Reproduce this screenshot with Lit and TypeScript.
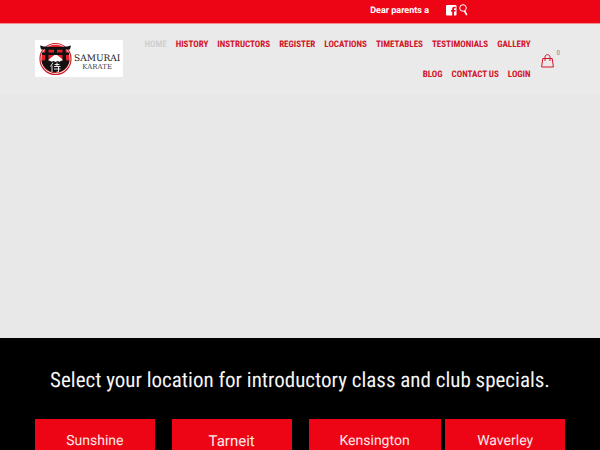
import { LitElement, html, css, svg } from "lit";
import { customElement, property } from "lit/decorators.js";
import { classMap } from "lit/directives/class-map.js";

@customElement("samurai-logo")
class SamuraiLogo extends LitElement {
  static styles = css`
    :host { display: block; }
    .logo {
      display: flex; align-items: center; gap: 2px;
      width: 88px; height: 37px; box-sizing: border-box; padding-left: 4px;
      background: #fff; color: #222; text-decoration: none;
    }
    .mark { flex: none; display: block; }
    .name {
      display: flex; flex-direction: column; align-items: center; padding-top: 8px;
      font-family: "DejaVu Serif", serif;
    }
    .first { font-size: 9px; line-height: 9px; }
    .second { font-size: 7px; line-height: 7px; color: #444; }
  `;
  render() {
    return html`<a class="logo" href="#" aria-label="Samurai Karate">
      <svg class="mark" width="33" height="35" viewBox="0 0 33 35" aria-hidden="true">
        <circle cx="16.5" cy="18" r="15.5" fill="#fff" stroke="#c9202b" stroke-width="1.2" />
        <circle cx="16.5" cy="18" r="14.2" fill="#e5222b" />
        <path d="M2.500 19.500h28a14.200 14.200 0 0 1-28 0z" fill="#111" />
        <path d="M8 20l5.500-4.500 2-1.500h2.500l2 1.500 5.500 4.500-3-.5-2 1.200-2-.8-2 1.200-2-1.200-2 .8-2-1.200z" fill="#fff" />
        <path d="M1 4.500c5 2 26 2 31 0l-1 3.700c-3 .8-26 .8-29 0z" fill="#111" />
        <path d="M3 11.500h27v2.500H3zM6.500 8h3v13.500l-.5 3H5.500zM23.500 8h3l1 16.500H24l-.5-3zM15 8h3v4h-3z" fill="#111" />
        <path d="M14 21.500l-2.500 4M13 24.500v6.500M15.500 23.500h5M18 21.500v4M15 25.500h6.500M15 28h6.500M19.500 25.500v5.500h-2" fill="none" stroke="#fff" stroke-width=".9" />
      </svg>
      <span class="name"><span class="first">SAMURAI</span><span class="second">KARATE</span></span>
    </a>`;
  }
}

@customElement("location-button")
class LocationButton extends LitElement {
  @property() name = "";
  @property({ type: Boolean }) large = false;
  static styles = css`
    :host { display: block; min-width: 0; }
    .button {
      display: block; box-sizing: border-box; width: max-content; min-width: 100%;
      padding: 8px 31px; background: #ee0515; color: #fbe9e9; text-align: center;
      font-family: Roboto, sans-serif; font-size: 14px; line-height: 28px;
      white-space: nowrap; text-decoration: none;
    }
    .large { font-size: 15px; }
  `;
  render() {
    return html`<a class=${classMap({ button: true, large: this.large })} href="#">${this.name}</a>`;
  }
}

const links = ["HOME", "HISTORY", "INSTRUCTORS", "REGISTER", "LOCATIONS", "TIMETABLES",
  "TESTIMONIALS", "GALLERY", "BLOG", "CONTACT US", "LOGIN"];

const places = [
  { name: "Sunshine", large: false },
  { name: "Tarneit", large: true },
  { name: "Kensington", large: false },
  { name: "Waverley", large: false },
];

const facebook = svg`<path fill="#fff" fill-rule="evenodd" d="M1 0h8.500a1 1 0 0 1 1 1v8.500a1 1 0 0 1-1 1H8V6.600h1.400l.2-1.700H8V4c0-.6.200-.8.800-.8h.8V1.700H8.300C6.900 1.700 6.200 2.500 6.200 3.800v1.100H5v1.700h1.200v3.900H1a1 1 0 0 1-1-1V1a1 1 0 0 1 1-1z"/>`;

@customElement("app-root")
class AppRoot extends LitElement {
  static styles = css`
    :host {
      display: flex; flex-direction: column; min-height: 100vh;
      background: #e8e8e8; font-family: Roboto, sans-serif;
      text-rendering: geometricPrecision;
    }
    .top {
      display: flex; align-items: center; justify-content: flex-end;
      height: 24px; padding: 0 132px 3px 35px; box-sizing: border-box;
      background: #ee0515; color: #fff; border-bottom: 1px solid #f08c8f;
    }
    .notice { font-size: 9px; font-weight: 700; line-height: 18px; padding-top: 2px; margin-right: 17px; }
    .social { display: block; margin-right: 2px; }
    .social svg, .search svg, .bag svg { display: block; }
    .search { padding: 0; border: 0; background: none; }
    .header {
      display: flex; align-items: flex-start; padding: 6px 35px 4px; background: #eaeaea;
    }
    .brand { padding-top: 10px; }
    .menu {
      flex: 1; display: flex; flex-wrap: wrap; justify-content: flex-end;
      column-gap: 9px; margin: 0 0 0 16px; padding: 0; list-style: none;
      font-family: "Roboto Condensed", Roboto, sans-serif;
      font-size: 9px; font-weight: 700; line-height: 30px;
    }
    .menu a { color: #d3142a; text-decoration: none; }
    .menu .current { color: #d0d0d0; }
    .bag {
      display: flex; align-items: flex-start; gap: 3px; margin: 18px 5px 0 10px;
      color: #888; font-family: "Roboto Condensed", Roboto, sans-serif;
      font-size: 7px; line-height: 10px; text-decoration: none;
    }
    .bag svg { margin-top: 6px; }
    .hero { height: 244px; }
    .locations { flex: 1; padding: 25px 35px 0; background: #000; }
    .title {
      margin: 0 -35px 20px; color: #f5f5f5; text-align: center; font-weight: 400;
      font-family: "Roboto Condensed", Roboto, sans-serif; font-size: 21px; line-height: 36px;
    }
    .grid { display: grid; grid-template-columns: repeat(4, minmax(0, 1fr)); gap: 17px; }
  `;
  render() {
    return html`
      <div class="top">
        <span class="notice">Dear parents a</span>
        <a class="social" href="#" aria-label="Facebook"><svg width="11" height="11" viewBox="0 0 11 11">${facebook}</svg></a>
        <button class="search" aria-label="Search">
          <svg width="9" height="12" viewBox="0 0 9 12" fill="none" stroke="#fff">
            <circle cx="4" cy="4" r="3.300" /><path d="M5.500 7l2.300 4" stroke-width="1.600" />
          </svg>
        </button>
      </div>
      <header class="header">
        <samurai-logo class="brand"></samurai-logo>
        <ul class="menu">
          ${links.map((l, i) => html`<li><a class=${classMap({ current: i === 0 })} href="#">${l}</a></li>`)}
        </ul>
        <a class="bag" href="#" aria-label="Cart">
          <svg width="13" height="14" viewBox="0 0 13 14" fill="none" stroke="#d3142a">
            <path d="M1.800 4.500h9.400l1.200 8.500H.6z" /><path d="M4 7V3.200C4 1.500 5 .7 6.500.7S9 1.500 9 3.200V7" />
          </svg><span>0</span>
        </a>
      </header>
      <div class="hero"></div>
      <section class="locations">
        <h1 class="title">Select your location for introductory class and club specials.</h1>
        <div class="grid">
          ${places.map(p => html`<location-button .name=${p.name} .large=${p.large}></location-button>`)}
        </div>
      </section>`;
  }
}
